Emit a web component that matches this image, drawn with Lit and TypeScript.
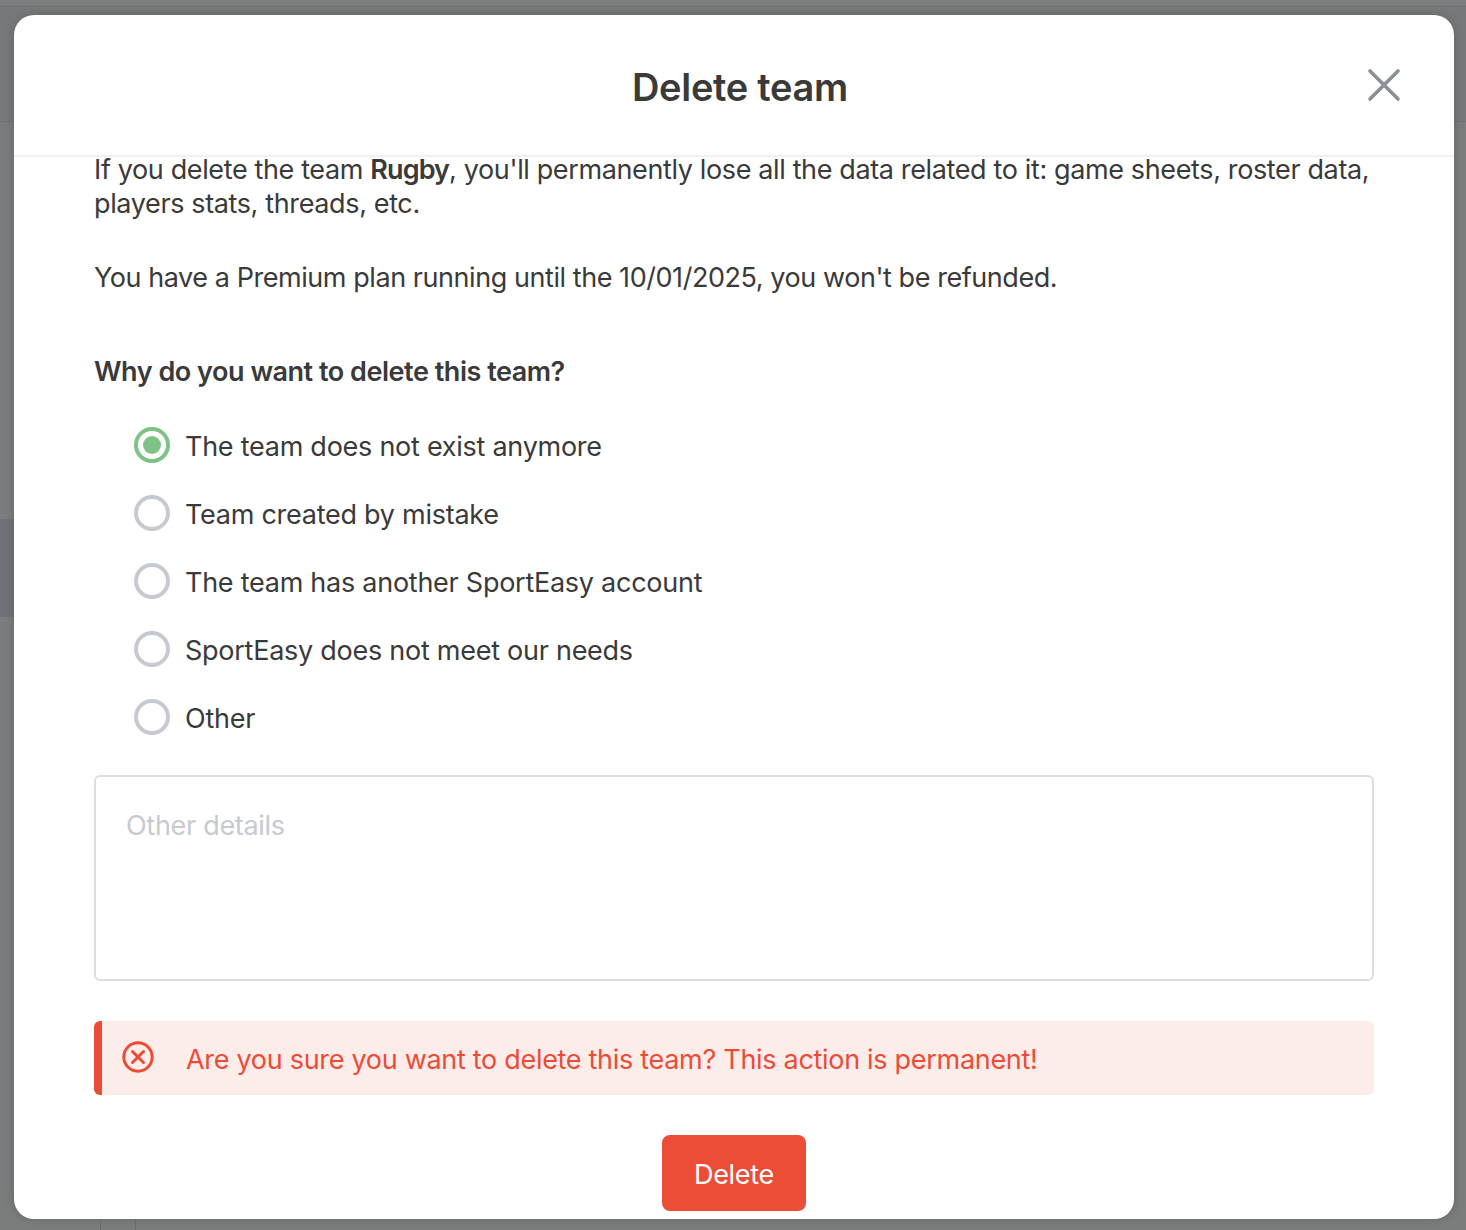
import { LitElement, html, css } from "lit";
import { customElement } from "lit/decorators.js";

const REASONS = [
  "The team does not exist anymore",
  "Team created by mistake",
  "The team has another SportEasy account",
  "SportEasy does not meet our needs",
  "Other",
];

@customElement("app-root")
export class AppRoot extends LitElement {
  static styles = css`
    :host {
      display: block;
      width: 1466px;
      height: 1230px;
      overflow: hidden;
      font-family: "Inter", "Liberation Sans", sans-serif;
      color: #3a3a3a;
    }
    .backdrop {
      position: relative;
      height: 1230px;
      box-sizing: border-box;
      padding: 15px 12px 11px 14px;
      background: #7b7c7c;
    }
    .page-top {
      position: absolute;
      left: 0;
      right: 0;
      top: 0;
      height: 121px;
      background: #77787a;
      border-bottom: 1px solid #6f7071;
    }
    .page-top::before {
      content: "";
      display: block;
      height: 6px;
      background: #7d7d7d;
      border-bottom: 1px solid #707172;
    }
    .page-band {
      position: absolute;
      left: 0;
      width: 14px;
      top: 519px;
      height: 98px;
      background: #6f7174;
    }
    .page-cell {
      position: absolute;
      left: 100px;
      top: 1218px;
      width: 34px;
      height: 12px;
      border: 1px solid #6c6d6e;
      border-bottom: 0;
    }
    .modal {
      position: relative;
      height: 1204px;
      background: #fff;
      border-radius: 20px;
      overflow: hidden;
      box-shadow: -3px 0 6px rgba(90, 95, 105, 0.35), 3px 0 6px rgba(90, 95, 105, 0.35);
    }
    header {
      height: 140px;
      display: flex;
      align-items: center;
      justify-content: center;
      border-bottom: 2px solid #f1f1f5;
      position: relative;
    }
    h1 {
      margin: 4px 0 0 12px;
      font-size: 38px;
      font-weight: 600;
      letter-spacing: -0.3px;
      color: #3a3a3a;
      line-height: 48px;
    }
    .close {
      position: absolute;
      right: 52px;
      top: 53px;
      width: 36px;
      height: 36px;
      display: block;
    }
    .body {
      padding: 0 80px;
      margin-top: -4px;
    }
    p {
      margin: 0;
      font-size: 27px;
      line-height: 34px;
      letter-spacing: -0.44px;
    }
    .p1 {
      letter-spacing: -0.37px;
    }
    b {
      font-weight: 600;
      letter-spacing: -0.9px;
    }
    .p2 {
      margin-top: 40px;
    }
    .question {
      margin-top: 60px;
      font-weight: 600;
      letter-spacing: -0.47px;
    }
    .reasons {
      margin-top: 38px;
      padding-left: 40px;
      display: flex;
      flex-direction: column;
      gap: 28px;
    }
    .reason {
      display: flex;
      align-items: center;
      gap: 15px;
      height: 40px;
      font-size: 27px;
      letter-spacing: -0.26px;
    }
    .reason-label {
      padding-bottom: 2px;
    }
    .radio {
      width: 36px;
      height: 36px;
      box-sizing: border-box;
      border-radius: 50%;
      border: 4px solid #c7cad2;
      flex: none;
      display: flex;
      align-items: center;
      justify-content: center;
      margin-top: -4px;
    }
    .radio.on {
      border-color: #7fc285;
    }
    .radio.on::after {
      content: "";
      width: 18px;
      height: 18px;
      border-radius: 50%;
      background: #7fc285;
    }
    .details {
      margin-top: 36px;
      height: 206px;
      box-sizing: border-box;
      border: 2px solid #dcdee3;
      border-radius: 6px;
      padding: 32px 30px;
      font-size: 27px;
      line-height: 34px;
      letter-spacing: -0.3px;
      color: #c7cad2;
    }
    .alert {
      margin-top: 40px;
      height: 74px;
      box-sizing: border-box;
      display: flex;
      align-items: center;
      gap: 32px;
      padding: 2px 0 0 20px;
      background: #fcecea;
      border-left: 8px solid #ec4c36;
      border-radius: 6px;
      color: #ec4c36;
      font-size: 27px;
      letter-spacing: -0.3px;
    }
    .alert svg {
      width: 32px;
      height: 32px;
      flex: none;
      margin-top: -4px;
    }
    .actions {
      margin-top: 40px;
      display: flex;
      justify-content: center;
    }
    button {
      width: 144px;
      height: 76px;
      border: 0;
      border-radius: 8px;
      padding: 2px 0 0;
      background: #eb4d37;
      color: #fff;
      font: inherit;
      font-size: 27px;
      letter-spacing: -0.3px;
    }
  `;

  render() {
    return html`
      <div class="backdrop">
        <div class="page-top"></div>
        <div class="page-band"></div>
        <div class="page-cell"></div>
        <div class="modal">
          <header>
            <h1>Delete team</h1>
            <svg class="close" viewBox="0 0 36 36" fill="none" stroke="#8b9096" stroke-width="3.6" stroke-linecap="round">
              <path d="M4 3L32 31M32 3L4 31"></path>
            </svg>
          </header>
          <div class="body">
            <p class="p1">If you delete the team <b>Rugby</b>, you'll permanently lose all the data related to it: game sheets, roster data, players stats, threads, etc.</p>
            <p class="p2">You have a Premium plan running until the 10/01/2025, you won't be refunded.</p>
            <p class="question">Why do you want to delete this team?</p>
            <div class="reasons">
              ${REASONS.map(
                (r, i) => html`<div class="reason"><span class="radio ${i === 0 ? "on" : ""}"></span><span class="reason-label">${r}</span></div>`
              )}
            </div>
            <div class="details">Other details</div>
            <div class="alert">
              <svg viewBox="0 0 32 32" fill="none" stroke="#ec4c36" stroke-width="3" stroke-linecap="round">
                <circle cx="16" cy="16" r="14.2"></circle>
                <path d="M10.5 10.5L21.5 21.5M21.5 10.5L10.5 21.5"></path>
              </svg>
              <span>Are you sure you want to delete this team? This action is permanent!</span>
            </div>
            <div class="actions"><button>Delete</button></div>
          </div>
        </div>
      </div>
    `;
  }
}
